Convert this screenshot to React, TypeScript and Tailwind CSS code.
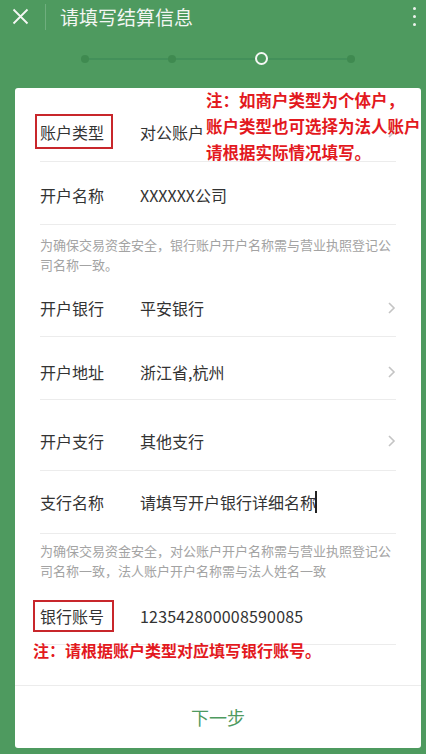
import React from "react";

const FONT = { fontFamily: '"Noto Sans CJK SC", "Noto Sans", sans-serif' };

const Chevron: React.FC = () => (
  <svg width="9" height="14" viewBox="0 0 9 14" className="shrink-0">
    <path d="M2 2l5 5-5 5" fill="none" stroke="#c4c4c4" strokeWidth="1.6" />
  </svg>
);

type RowProps = {
  label: React.ReactNode;
  value: React.ReactNode;
  arrow?: boolean;
  className?: string;
};

const Row: React.FC<RowProps> = ({ label, value, arrow, className }) => (
  <div className={`flex items-center border-b border-[#ececec] ${className ?? ""}`}>
    <div className="w-[100px] shrink-0 text-[16px] leading-[22px] text-[#333]">{label}</div>
    <div className="flex-1 text-[16px] leading-[22px] text-[#333]">{value}</div>
    {arrow && <Chevron />}
  </div>
);

const Hint: React.FC<{ children: React.ReactNode; className?: string }> = ({ children, className }) => (
  <p className={`text-[13px] leading-[20px] text-[#a3a3a3] ${className ?? ""}`}>{children}</p>
);

// red box drawn round a label, as in the annotated screenshot
const Boxed: React.FC<{ children: React.ReactNode; box: string }> = ({ children, box }) => (
  <span className="relative inline-block">
    {children}
    <span className={`pointer-events-none absolute border-2 border-[#c8262b] ${box}`} />
  </span>
);

export default function App() {
  return (
    <div className="w-[426px] h-[754px] overflow-hidden bg-[#4e9a5f]" style={FONT}>
      {/* ===== HEADER ===== */}
      <div className="flex h-[33px] items-center">
        <div className="flex w-[40px] justify-center pl-[1px]">
          <svg width="17" height="17" viewBox="0 0 17 17">
            <path d="M1.5 1.5l14 14M15.5 1.5l-14 14" stroke="#f4f7f4" strokeWidth="1.8" />
          </svg>
        </div>
        <div className="ml-[5px] h-[26px] w-px bg-[#6fae7e]" />
        <h1 className="ml-[14px] flex-1 text-[19px] leading-[24px] text-[#f3f6f3]">请填写结算信息</h1>
        <div className="mr-[10px] flex flex-col items-center gap-[5px]">
          <span className="h-[3px] w-[3px] rounded-full bg-[#eef3ee]" />
          <span className="h-[3px] w-[3px] rounded-full bg-[#eef3ee]" />
          <span className="h-[3px] w-[3px] rounded-full bg-[#eef3ee]" />
        </div>
      </div>

      {/* ===== STEPPER ===== */}
      <div className="flex h-[55px] items-center pl-[81px] pr-[71px] pb-[4px]">
        <span className="h-[8px] w-[8px] shrink-0 rounded-full bg-[#3f8a50]" />
        <span className="h-[2px] flex-1 bg-[#43905a]" />
        <span className="h-[8px] w-[8px] shrink-0 rounded-full bg-[#3f8a50]" />
        <span className="h-[2px] flex-1 bg-[#43905a]" />
        <span className="h-[13px] w-[13px] shrink-0 rounded-full border-2 border-[#f4f7f4]" />
        <span className="h-[2px] flex-1 bg-[#43905a]" />
        <span className="h-[8px] w-[8px] shrink-0 rounded-full bg-[#3f8a50]" />
      </div>

      {/* ===== CARD ===== */}
      <div className="relative ml-[15px] mr-[5px] h-[660px] rounded-[3px] bg-white">
        <div className="px-[25px] pt-[14px]">
          <Row
            className="h-[60px]"
            label={<Boxed box="-top-[7px] -bottom-[6px] -left-[5px] -right-[9px]">账户类型</Boxed>}
            value="对公账户"
            arrow
          />
          <Row className="h-[63px] pt-[4px]" label="开户名称" value="XXXXXX公司" />
          <Hint className="pt-[10px]">为确保交易资金安全，银行账户开户名称需与营业执照登记公司名称一致。</Hint>
          <Row className="h-[62px] pt-[4px]" label="开户银行" value="平安银行" arrow />
          <Row className="h-[63px] pt-[7px]" label="开户地址" value="浙江省,杭州" arrow />
          <Row className="h-[71px] pt-[12px]" label="开户支行" value="其他支行" arrow />
          <Row
            className="h-[63px]"
            label="支行名称"
            value={
              <span className="inline-flex items-center">
                请填写开户银行详细名称
                <span className="ml-[-1px] inline-block h-[22px] w-[2px] bg-[#222]" />
              </span>
            }
          />
          <Hint className="pt-[7px]">为确保交易资金安全，对公账户开户名称需与营业执照登记公司名称一致，法人账户开户名称需与法人姓名一致</Hint>
          <Row
            className="h-[64px] pt-[6px]"
            label={<Boxed box="-top-[5px] -bottom-[5px] -left-[7px] -right-[10px]">银行账号</Boxed>}
            value={<span className="tracking-[0.2px]">123542800008590085</span>}
          />
        </div>

        <div className="mt-[40px] flex h-[63px] items-center justify-center border-t border-[#ececec]">
          <span className="text-[18px] leading-[24px] text-[#4e9a5f]">下一步</span>
        </div>

        {/* ===== RED ANNOTATIONS ===== */}
        <div className="pointer-events-none absolute left-[191px] top-[-1px] text-[16.5px] font-bold leading-[26px] text-[#e3191e]">
          <p>注：如商户类型为个体户，</p>
          <p>账户类型也可选择为法人账户</p>
          <p>请根据实际情况填写。</p>
        </div>
        <p className="pointer-events-none absolute left-[18px] top-[550px] text-[16px] font-bold leading-[24px] text-[#e3191e]">
          注：请根据账户类型对应填写银行账号。
        </p>
      </div>
    </div>
  );
}
